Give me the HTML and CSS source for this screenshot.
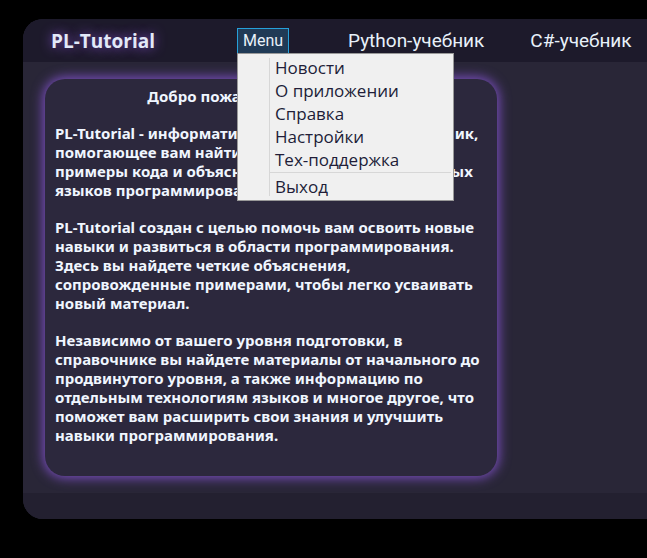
FILE: index.html
```html
<!DOCTYPE html>
<html lang="ru">
<head>
<meta charset="utf-8">
<title>PL-Tutorial</title>
<link rel="stylesheet" href="styles.css">
</head>
<body>
<div class="window">
  <header class="bar">
    <h1 class="brand">PL-Tutorial</h1>
    <div class="menu">
      <button class="menu-button" type="button" aria-haspopup="true" aria-expanded="true">Menu</button>
      <div class="popup" role="menu">
        <button class="item" type="button" role="menuitem">Новости</button>
        <button class="item" type="button" role="menuitem">О приложении</button>
        <button class="item" type="button" role="menuitem">Справка</button>
        <button class="item" type="button" role="menuitem">Настройки</button>
        <button class="item" type="button" role="menuitem">Тех-поддержка</button>
        <hr class="separator">
        <button class="item" type="button" role="menuitem">Выход</button>
      </div>
    </div>
    <nav class="links">
      <a class="link" href="#python">Python-учебник</a>
      <a class="link" href="#csharp">C#-учебник</a>
    </nav>
  </header>
  <main class="content">
    <article class="card">
      <h2 class="title">Добро пожаловать в PL-Tutorial!</h2>
      <p>PL-Tutorial - информативное приложение-справочник,<br>помогающее вам найти нужные материалы,<br>примеры кода и объяснения для многих популярных<br>языков программирования.</p>
      <p>PL-Tutorial создан с целью помочь вам освоить новые<br>навыки и развиться в области программирования.<br>Здесь вы найдете четкие объяснения,<br>сопровожденные примерами, чтобы легко усваивать<br>новый материал.</p>
      <p>Независимо от вашего уровня подготовки, в<br>справочнике вы найдете материалы от начального до<br>продвинутого уровня, а также информацию по<br>отдельным технологиям языков и многое другое, что<br>поможет вам расширить свои знания и улучшить<br>навыки программирования.</p>
    </article>
  </main>
  <footer class="footer"></footer>
</div>
</body>
</html>
```
FILE: styles.css
```css
* {
  box-sizing: border-box;
}

body {
  margin: 0;
  padding: 19px 0 39px 23px;
  background: #000;
  color: #f0f6ff;
  font-family: "Open Sans", "Noto Sans", sans-serif;
}

.window {
  border-radius: 20px 0 0 20px;
  background: #292637;
}

.bar {
  display: flex;
  align-items: center;
  height: 43px;
  padding-left: 28px;
  border-radius: 20px 0 0 0;
  background: #1d1a2b;
  white-space: nowrap;
}

.brand {
  flex: 0 0 186px;
  margin: 0;
  font-size: 19px;
  line-height: 26px;
  color: #e2e9f8;
  text-shadow: 0 0 12px #8050c8;
}

.menu {
  position: relative;
  flex: 0 0 52px;
}

.menu-button {
  display: block;
  width: 100%;
  height: 26px;
  padding: 0;
  border: 1px solid #26a0da;
  background: #203a56;
  color: #e8f1fa;
  font: 16px/24px Roboto, sans-serif;
}

.popup {
  position: absolute;
  z-index: 1;
  top: 25px;
  left: 0;
  width: 217px;
  padding: 2px;
  border: 1px solid #999;
  background: linear-gradient(#d7d7d7, #d7d7d7) 31px 4px / 1px calc(100% - 8px) no-repeat #f0f0f0;
}

.item {
  display: block;
  width: 100%;
  height: 23px;
  padding: 0 0 0 35px;
  border: 0;
  background: none;
  color: #211d38;
  font: 17px/23px "Open Sans", "Noto Sans", sans-serif;
  text-align: left;
}

.separator {
  height: 1px;
  margin: 1px 0 2px 30px;
  border: 0;
  background: #d7d7d7;
}

.links {
  display: flex;
  gap: 46px;
  margin-left: 59px;
}

.link {
  color: #e8f1fa;
  font: 19px/24px Roboto, sans-serif;
  text-decoration: none;
}

.content {
  padding: 17px 22px 17px;
}

.card {
  max-width: 452px;
  padding: 8px 10px 31px;
  border-radius: 20px;
  background: #2c283d;
  box-shadow: 0 0 12px 2px #7b4fc0;
  font-family: "Noto Sans", sans-serif;
  font-size: 15px;
  font-weight: 700;
  line-height: 19px;
  white-space: nowrap;
}

.title {
  margin: 0;
  font-size: 15px;
  text-align: center;
}

.card p {
  margin: 18px 0 0;
}

.footer {
  height: 26px;
  border-radius: 0 0 0 20px;
  background: #232030;
}
```
